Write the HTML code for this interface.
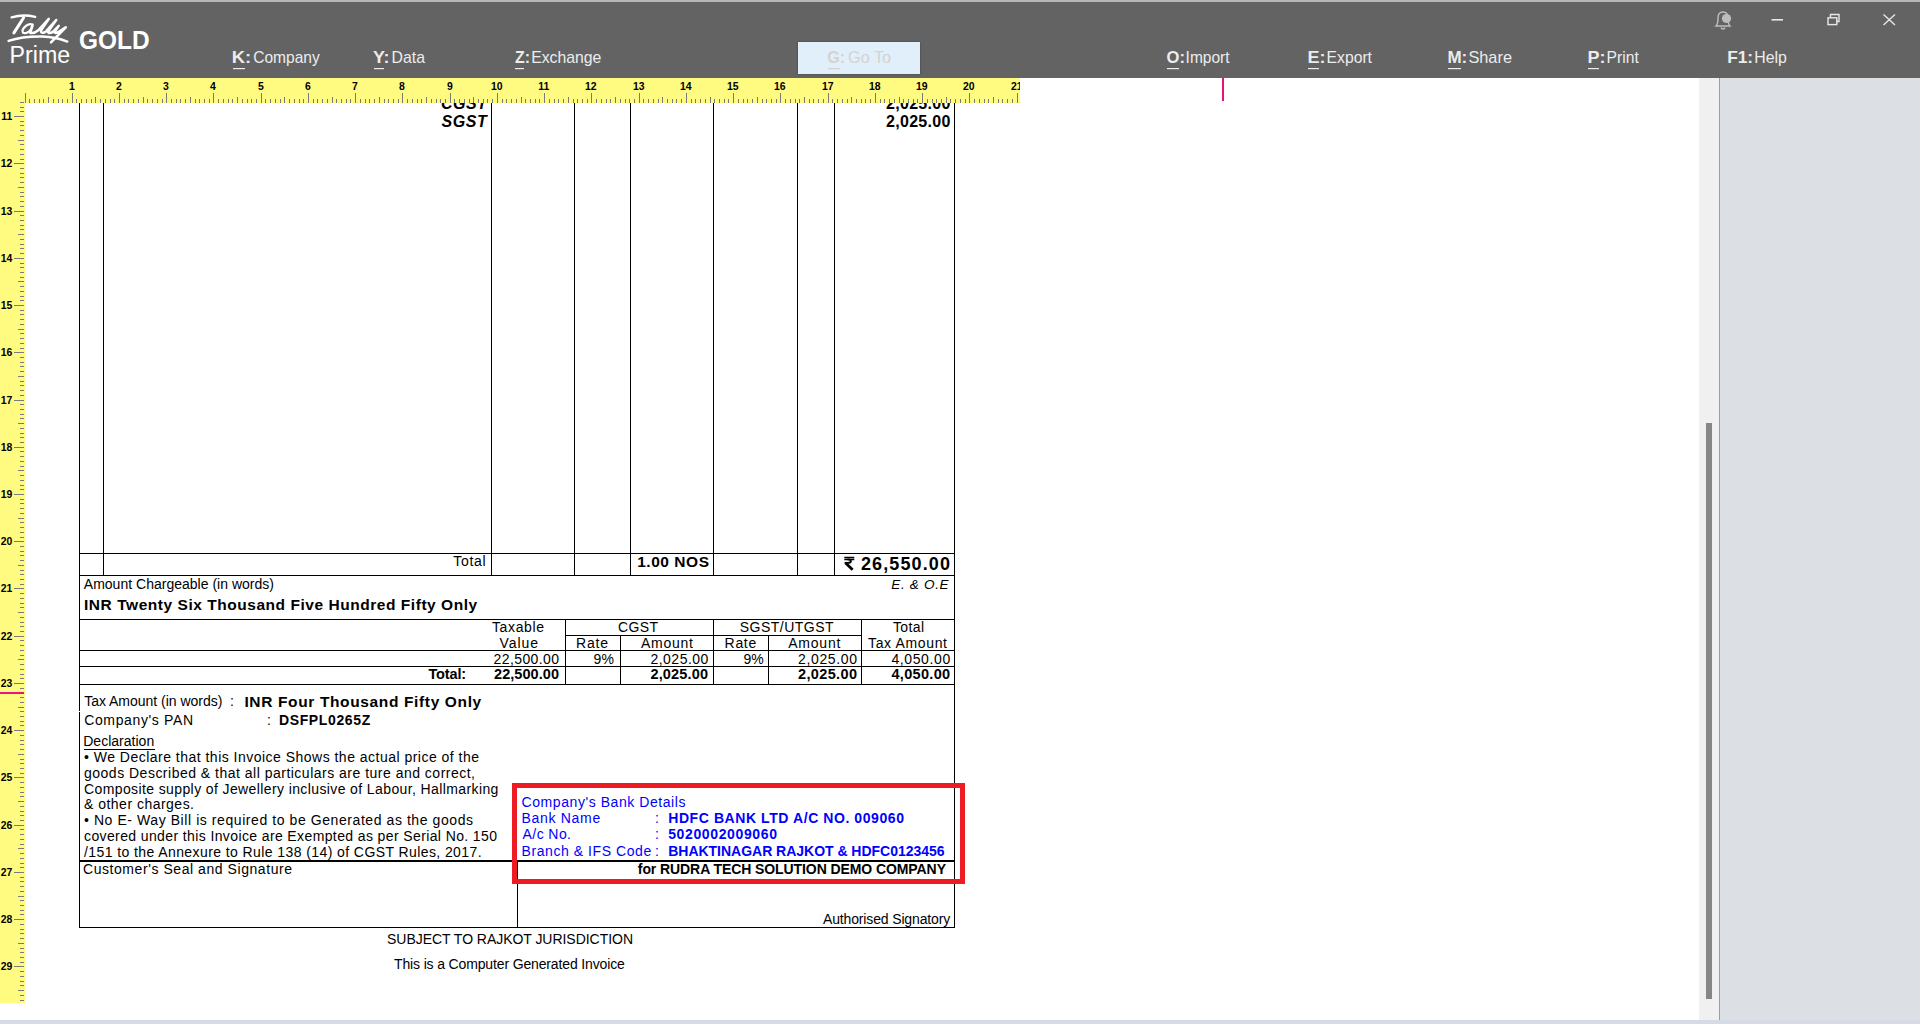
<!DOCTYPE html><html><head><meta charset="utf-8"><title>TallyPrime</title><style>
*{margin:0;padding:0;box-sizing:border-box}
html,body{width:1920px;height:1024px;overflow:hidden;background:#fff;font-family:"Liberation Sans",sans-serif}
.abs{position:absolute}
#top{left:0;top:0;width:1920px;height:2px;background:#BAB6B6}
#hdr{left:0;top:2px;width:1920px;height:76px;background:#636363}
#goto{left:798px;top:42px;width:122px;height:32px;background:#E1EFFA;box-shadow:0 0 2px rgba(0,0,0,.35)}
#rpanel{left:1719px;top:78px;width:201px;height:942px;background:#DCE0E4;border-left:1px solid #9C9C9C}
#track{left:1699px;top:78px;width:20px;height:942px;background:#F0F0F0}
#thumb{left:1706px;top:423px;width:6px;height:576px;background:#868686}
#bot{left:0;top:1020px;width:1920px;height:4px;background:#D5DAE4}

</style></head><body>
<div id="top" class="abs"></div>
<div id="hdr" class="abs"></div>
<svg class="abs" style="left:0;top:0" width="160" height="78" viewBox="0 0 160 78">
<g fill="none" stroke="#fff" stroke-linecap="round" stroke-linejoin="round">
<path d="M11.6 17.4 C18 15.4 28 15.1 35.2 16.9" stroke-width="2.3"/>
<path d="M23.6 17.7 L13.9 32.9" stroke-width="3"/>
<ellipse cx="27.4" cy="28.7" rx="5.9" ry="3.1" transform="rotate(-40 27.4 28.7)" stroke-width="2.2"/>
<path d="M32.6 24.6 L30.2 32.8 C33 33.6 35.5 32.5 38 30.5 L48.8 18.8 L41 30.6 C40.4 33.2 43.5 33.4 46 31.4 L56.2 20 L48.2 31.6 C47.8 33.8 51 33.4 53.6 31.2 L58.8 25.8 L54.6 31.8 C54.4 33.6 57 33 59.5 31.4 L65.8 27.3 L51 42.3" stroke-width="2.5"/>
<path d="M8.6 40.9 C18 37.8 30 36.3 42 36.5 C52 36.8 60 38.6 67.3 41.6" stroke-width="2.4"/>
</g>
<text x="9.6" y="63" font-family="Liberation Sans" font-size="23" fill="#fff" textLength="60.6" lengthAdjust="spacingAndGlyphs">Prime</text>
<text x="79" y="48.8" font-family="Liberation Sans" font-size="25.5" font-weight="bold" fill="#fff" textLength="70.6" lengthAdjust="spacingAndGlyphs">GOLD</text>
</svg>
<div id="goto" class="abs"></div>
<svg class="abs" style="left:0;top:0" width="1920" height="78" font-family="Liberation Sans">
<text x="231.8" y="63" font-size="17" fill="#ECECEC" font-weight="bold" textLength="19.4" lengthAdjust="spacingAndGlyphs">K:</text>
<text x="253.2" y="63" font-size="17" fill="#ECECEC" textLength="66.6" lengthAdjust="spacingAndGlyphs">Company</text>
<text x="373.0" y="63" font-size="17" fill="#ECECEC" font-weight="bold" textLength="16.6" lengthAdjust="spacingAndGlyphs">Y:</text>
<text x="391.6" y="63" font-size="17" fill="#ECECEC" textLength="33.4" lengthAdjust="spacingAndGlyphs">Data</text>
<text x="515.0" y="63" font-size="17" fill="#ECECEC" font-weight="bold" textLength="15.0" lengthAdjust="spacingAndGlyphs">Z:</text>
<text x="531.2" y="63" font-size="17" fill="#ECECEC" textLength="70.2" lengthAdjust="spacingAndGlyphs">Exchange</text>
<text x="827.2" y="63" font-size="17" fill="#D5D2CF" font-weight="bold" textLength="18.0" lengthAdjust="spacingAndGlyphs">G:</text>
<text x="848.0" y="63" font-size="17" fill="#D5D2CF" textLength="43.2" lengthAdjust="spacingAndGlyphs">Go To</text>
<text x="1166.6" y="63" font-size="17" fill="#ECECEC" font-weight="bold" textLength="18.4" lengthAdjust="spacingAndGlyphs">O:</text>
<text x="1185.6" y="63" font-size="17" fill="#ECECEC" textLength="44.0" lengthAdjust="spacingAndGlyphs">Import</text>
<text x="1307.6" y="63" font-size="17" fill="#ECECEC" font-weight="bold" textLength="18.0" lengthAdjust="spacingAndGlyphs">E:</text>
<text x="1326.6" y="63" font-size="17" fill="#ECECEC" textLength="45.4" lengthAdjust="spacingAndGlyphs">Export</text>
<text x="1447.4" y="63" font-size="17" fill="#ECECEC" font-weight="bold" textLength="19.8" lengthAdjust="spacingAndGlyphs">M:</text>
<text x="1468.4" y="63" font-size="17" fill="#ECECEC" textLength="43.6" lengthAdjust="spacingAndGlyphs">Share</text>
<text x="1587.6" y="63" font-size="17" fill="#ECECEC" font-weight="bold" textLength="18.0" lengthAdjust="spacingAndGlyphs">P:</text>
<text x="1606.6" y="63" font-size="17" fill="#ECECEC" textLength="32.2" lengthAdjust="spacingAndGlyphs">Print</text>
<text x="1727.2" y="63" font-size="17" fill="#ECECEC" font-weight="bold" textLength="25.8" lengthAdjust="spacingAndGlyphs">F1:</text>
<text x="1754.2" y="63" font-size="17" fill="#ECECEC" textLength="32.6" lengthAdjust="spacingAndGlyphs">Help</text>
<rect x="233" y="68" width="12" height="1.2" fill="#ECECEC"/>
<rect x="374" y="68" width="10" height="1.2" fill="#ECECEC"/>
<rect x="515" y="68" width="9" height="1.2" fill="#ECECEC"/>
<rect x="828" y="68" width="12" height="1.2" fill="#D5D2CF"/>
<rect x="1167" y="68" width="12" height="1.2" fill="#ECECEC"/>
<rect x="1308" y="68" width="11" height="1.2" fill="#ECECEC"/>
<rect x="1448" y="68" width="13" height="1.2" fill="#ECECEC"/>
<rect x="1588" y="68" width="11" height="1.2" fill="#ECECEC"/>
</svg>
<svg class="abs" style="left:1700px;top:0" width="220" height="40" viewBox="0 0 220 40">
<g fill="none" stroke="#BDBDBD" stroke-width="1.4">
<path d="M16 26 C18 24 18 22 18 18 C18 14 20 12 23 12 C26 12 28 14 28 18 C28 22 28 24 30 26 Z"/>
<path d="M21 27.5 C21.5 29.5 24.5 29.5 25 27.5"/>
</g>
<circle cx="26.5" cy="18.5" r="4.6" fill="#BDBDBD"/>
<rect x="71.5" y="19" width="11.5" height="1.6" fill="#E8E8E8"/>
<g fill="none" stroke="#E8E8E8" stroke-width="1.4">
<path d="M130.5 17.5 V14.5 H139 V21.5 H137"/>
<rect x="128" y="17.8" width="8.8" height="6.8"/>
<path d="M183.5 14.5 L195 25 M195 14.5 L183.5 25"/>
</g>
</svg>
<div id="track" class="abs"></div><div id="rpanel" class="abs"></div><div id="thumb" class="abs"></div><div id="bot" class="abs"></div>
<div class="abs" style="left:1222px;top:78px;width:2px;height:23px;background:#E8127C"></div>
<svg class="abs" style="left:0;top:0" width="1700" height="1020" viewBox="0 0 1700 1020" font-family="Liberation Sans">
<rect x="103" y="103" width="1" height="473" fill="#000"/>
<rect x="491" y="103" width="1" height="473" fill="#000"/>
<rect x="574" y="103" width="1" height="473" fill="#000"/>
<rect x="630" y="103" width="1" height="473" fill="#000"/>
<rect x="713" y="103" width="1" height="473" fill="#000"/>
<rect x="797" y="103" width="1" height="473" fill="#000"/>
<rect x="834" y="103" width="1" height="473" fill="#000"/>
<rect x="79" y="103" width="1" height="608" fill="#000"/>
<rect x="79" y="712" width="1" height="216" fill="#000"/>
<rect x="954" y="103" width="1" height="825" fill="#000"/>
<rect x="79" y="553" width="876" height="1" fill="#000"/>
<rect x="79" y="575" width="876" height="1" fill="#000"/>
<rect x="79" y="619" width="876" height="1" fill="#000"/>
<rect x="565" y="619" width="1" height="65" fill="#000"/>
<rect x="713" y="619" width="1" height="65" fill="#000"/>
<rect x="861" y="619" width="1" height="65" fill="#000"/>
<rect x="620" y="635" width="1" height="49" fill="#000"/>
<rect x="768" y="635" width="1" height="49" fill="#000"/>
<rect x="565" y="635" width="297" height="1" fill="#000"/>
<rect x="79" y="650" width="876" height="1" fill="#000"/>
<rect x="79" y="666" width="876" height="1" fill="#000"/>
<rect x="79" y="684" width="876" height="1" fill="#000"/>
<rect x="79" y="860" width="876" height="2" fill="#000"/>
<rect x="517" y="862" width="1" height="66" fill="#000"/>
<rect x="79" y="927" width="876" height="1" fill="#000"/>
<rect x="84" y="749" width="71" height="1" fill="#000"/>
<text x="441.0" y="109" font-size="16" font-weight="bold" font-style="italic" textLength="45.8" lengthAdjust="spacing">CGST</text>
<text x="441.6" y="127" font-size="16" font-weight="bold" font-style="italic" textLength="45.2" lengthAdjust="spacing">SGST</text>
<text x="886.0" y="109" font-size="16" font-weight="bold" textLength="64.4" lengthAdjust="spacing">2,025.00</text>
<text x="886.0" y="127" font-size="16" font-weight="bold" textLength="64.4" lengthAdjust="spacing">2,025.00</text>
<text x="453.2" y="566" font-size="14" textLength="32.4" lengthAdjust="spacing">Total</text>
<text x="637.2" y="567" font-size="15.5" font-weight="bold" textLength="71.8" lengthAdjust="spacing">1.00 NOS</text>
<text x="861.0" y="570" font-size="18" font-weight="bold" textLength="89.0" lengthAdjust="spacing">26,550.00</text>
<text x="891.2" y="589" font-size="13.5" font-style="italic" textLength="57.4" lengthAdjust="spacing">E. &amp; O.E</text>
<text x="83.8" y="589" font-size="14" textLength="190.2" lengthAdjust="spacing">Amount Chargeable (in words)</text>
<text x="84.0" y="610" font-size="15.5" font-weight="bold" textLength="393.2" lengthAdjust="spacing">INR Twenty Six Thousand Five Hundred Fifty Only</text>
<text x="492.0" y="632" font-size="14" textLength="52.0" lengthAdjust="spacing">Taxable</text>
<text x="499.6" y="648" font-size="14" textLength="38.4" lengthAdjust="spacing">Value</text>
<text x="618.0" y="632" font-size="14" textLength="40.0" lengthAdjust="spacing">CGST</text>
<text x="576.0" y="648" font-size="14" textLength="32.0" lengthAdjust="spacing">Rate</text>
<text x="641.0" y="648" font-size="14" textLength="52.0" lengthAdjust="spacing">Amount</text>
<text x="739.8" y="632" font-size="14" textLength="93.8" lengthAdjust="spacing">SGST/UTGST</text>
<text x="724.6" y="648" font-size="14" textLength="31.6" lengthAdjust="spacing">Rate</text>
<text x="788.2" y="648" font-size="14" textLength="52.2" lengthAdjust="spacing">Amount</text>
<text x="893.0" y="632" font-size="14" textLength="31.0" lengthAdjust="spacing">Total</text>
<text x="868.0" y="648" font-size="14" textLength="79.0" lengthAdjust="spacing">Tax Amount</text>
<text x="493.6" y="664" font-size="14" textLength="65.4" lengthAdjust="spacing">22,500.00</text>
<text x="593.6" y="664" font-size="14">9%</text>
<text x="650.4" y="664" font-size="14" textLength="58.0" lengthAdjust="spacing">2,025.00</text>
<text x="743.4" y="664" font-size="14">9%</text>
<text x="798.0" y="664" font-size="14" textLength="59.0" lengthAdjust="spacing">2,025.00</text>
<text x="891.4" y="664" font-size="14" textLength="58.8" lengthAdjust="spacing">4,050.00</text>
<text x="428.4" y="679" font-size="14.5" font-weight="bold" textLength="37.8" lengthAdjust="spacing">Total:</text>
<text x="494.0" y="679" font-size="14.5" font-weight="bold" textLength="65.0" lengthAdjust="spacing">22,500.00</text>
<text x="650.4" y="679" font-size="14.5" font-weight="bold" textLength="57.6" lengthAdjust="spacing">2,025.00</text>
<text x="798.0" y="679" font-size="14.5" font-weight="bold" textLength="59.0" lengthAdjust="spacing">2,025.00</text>
<text x="891.4" y="679" font-size="14.5" font-weight="bold" textLength="58.8" lengthAdjust="spacing">4,050.00</text>
<text x="84.2" y="706" font-size="14" textLength="138.2" lengthAdjust="spacing">Tax Amount (in words)</text>
<text x="230.0" y="706" font-size="14">:</text>
<text x="244.4" y="707" font-size="15.5" font-weight="bold" textLength="236.8" lengthAdjust="spacing">INR Four Thousand Fifty Only</text>
<text x="84.2" y="725" font-size="14" textLength="108.8" lengthAdjust="spacing">Company's PAN</text>
<text x="267.0" y="725" font-size="14">:</text>
<text x="279.0" y="725" font-size="14" font-weight="bold" textLength="91.2" lengthAdjust="spacing">DSFPL0265Z</text>
<text x="83.2" y="746" font-size="14" textLength="71.0" lengthAdjust="spacing">Declaration</text>
<text x="84.0" y="762" font-size="14" textLength="395.0" lengthAdjust="spacing">• We Declare that this Invoice Shows the actual price of the</text>
<text x="84.0" y="778" font-size="14" textLength="391.0" lengthAdjust="spacing">goods Described &amp; that all particulars are ture and correct,</text>
<text x="84.0" y="794" font-size="14" textLength="414.4" lengthAdjust="spacing">Composite supply of Jewellery inclusive of Labour, Hallmarking</text>
<text x="84.0" y="809" font-size="14" textLength="110.0" lengthAdjust="spacing">&amp; other charges.</text>
<text x="84.0" y="825" font-size="14" textLength="389.0" lengthAdjust="spacing">• No E- Way Bill is required to  be Generated as the goods</text>
<text x="84.0" y="841" font-size="14" textLength="413.0" lengthAdjust="spacing">covered under this Invoice are Exempted as per Serial No. 150</text>
<text x="84.0" y="857" font-size="14" textLength="397.6" lengthAdjust="spacing">/151 to the Annexure to Rule 138 (14) of CGST Rules, 2017.</text>
<text x="521.6" y="807" font-size="14" fill="#0000FF" textLength="163.8" lengthAdjust="spacing">Company's Bank Details</text>
<text x="521.6" y="823" font-size="14" fill="#0000FF" textLength="78.6" lengthAdjust="spacing">Bank Name</text>
<text x="522.6" y="839" font-size="14" fill="#0000FF" textLength="48.4" lengthAdjust="spacing">A/c No.</text>
<text x="521.6" y="856" font-size="14" fill="#0000FF" textLength="129.6" lengthAdjust="spacing">Branch &amp; IFS Code</text>
<text x="655.0" y="823" font-size="14" fill="#0000FF">:</text>
<text x="655.0" y="839" font-size="14" fill="#0000FF">:</text>
<text x="655.0" y="856" font-size="14" fill="#0000FF">:</text>
<text x="668.2" y="823" font-size="14" font-weight="bold" fill="#0000FF" textLength="235.8" lengthAdjust="spacing">HDFC BANK LTD A/C NO. 009060</text>
<text x="668.2" y="839" font-size="14" font-weight="bold" fill="#0000FF" textLength="108.8" lengthAdjust="spacing">5020002009060</text>
<text x="668.2" y="856" font-size="14" font-weight="bold" fill="#0000FF" textLength="276.4" lengthAdjust="spacing">BHAKTINAGAR RAJKOT &amp; HDFC0123456</text>
<text x="637.8" y="874" font-size="14" font-weight="bold" textLength="308.2" lengthAdjust="spacing">for RUDRA TECH SOLUTION DEMO COMPANY</text>
<text x="83.0" y="874" font-size="14" textLength="209.0" lengthAdjust="spacing">Customer's Seal and Signature</text>
<text x="823.0" y="924" font-size="14" textLength="127.2" lengthAdjust="spacing">Authorised Signatory</text>
<text x="387.0" y="944" font-size="14" textLength="246.0" lengthAdjust="spacing">SUBJECT TO RAJKOT JURISDICTION</text>
<text x="394.0" y="969" font-size="14" textLength="230.8" lengthAdjust="spacing">This is a Computer Generated Invoice</text>
<path d="M512 783 H965 V884 H512 Z M517 788 V879 H960 V788 Z" fill="#ED1C24" fill-rule="evenodd"/>
<g fill="none" stroke="#000"><path d="M844.3 557.4 H854.3 M844.3 559.6 H854.3" stroke-width="1.5"/><path d="M847.5 559.4 C852 559.4 852 562.9 847.5 562.9 H844.6" stroke-width="1.9"/><path d="M845.6 563 L852.6 569.8" stroke-width="2.8"/></g>
<rect x="0" y="78" width="1020" height="25" fill="#FFFB80"/>
<rect x="0" y="78" width="25" height="925" fill="#FFFB80"/>
<rect x="25" y="93" width="1" height="10" fill="#7A7A7A"/>
<rect x="29" y="99" width="1" height="4" fill="#7A7A7A"/>
<rect x="34" y="99" width="1" height="4" fill="#7A7A7A"/>
<rect x="39" y="99" width="1" height="4" fill="#7A7A7A"/>
<rect x="43" y="99" width="1" height="4" fill="#7A7A7A"/>
<rect x="48" y="97" width="1" height="6" fill="#7A7A7A"/>
<rect x="53" y="99" width="1" height="4" fill="#7A7A7A"/>
<rect x="58" y="99" width="1" height="4" fill="#7A7A7A"/>
<rect x="62" y="99" width="1" height="4" fill="#7A7A7A"/>
<rect x="67" y="99" width="1" height="4" fill="#7A7A7A"/>
<rect x="72" y="93" width="1" height="10" fill="#7A7A7A"/>
<rect x="76" y="99" width="1" height="4" fill="#7A7A7A"/>
<rect x="81" y="99" width="1" height="4" fill="#7A7A7A"/>
<rect x="86" y="99" width="1" height="4" fill="#7A7A7A"/>
<rect x="91" y="99" width="1" height="4" fill="#7A7A7A"/>
<rect x="95" y="97" width="1" height="6" fill="#7A7A7A"/>
<rect x="100" y="99" width="1" height="4" fill="#7A7A7A"/>
<rect x="105" y="99" width="1" height="4" fill="#7A7A7A"/>
<rect x="110" y="99" width="1" height="4" fill="#7A7A7A"/>
<rect x="114" y="99" width="1" height="4" fill="#7A7A7A"/>
<rect x="119" y="93" width="1" height="10" fill="#7A7A7A"/>
<rect x="124" y="99" width="1" height="4" fill="#7A7A7A"/>
<rect x="128" y="99" width="1" height="4" fill="#7A7A7A"/>
<rect x="133" y="99" width="1" height="4" fill="#7A7A7A"/>
<rect x="138" y="99" width="1" height="4" fill="#7A7A7A"/>
<rect x="143" y="97" width="1" height="6" fill="#7A7A7A"/>
<rect x="147" y="99" width="1" height="4" fill="#7A7A7A"/>
<rect x="152" y="99" width="1" height="4" fill="#7A7A7A"/>
<rect x="157" y="99" width="1" height="4" fill="#7A7A7A"/>
<rect x="162" y="99" width="1" height="4" fill="#7A7A7A"/>
<rect x="166" y="93" width="1" height="10" fill="#7A7A7A"/>
<rect x="171" y="99" width="1" height="4" fill="#7A7A7A"/>
<rect x="176" y="99" width="1" height="4" fill="#7A7A7A"/>
<rect x="180" y="99" width="1" height="4" fill="#7A7A7A"/>
<rect x="185" y="99" width="1" height="4" fill="#7A7A7A"/>
<rect x="190" y="97" width="1" height="6" fill="#7A7A7A"/>
<rect x="195" y="99" width="1" height="4" fill="#7A7A7A"/>
<rect x="199" y="99" width="1" height="4" fill="#7A7A7A"/>
<rect x="204" y="99" width="1" height="4" fill="#7A7A7A"/>
<rect x="209" y="99" width="1" height="4" fill="#7A7A7A"/>
<rect x="213" y="93" width="1" height="10" fill="#7A7A7A"/>
<rect x="218" y="99" width="1" height="4" fill="#7A7A7A"/>
<rect x="223" y="99" width="1" height="4" fill="#7A7A7A"/>
<rect x="228" y="99" width="1" height="4" fill="#7A7A7A"/>
<rect x="232" y="99" width="1" height="4" fill="#7A7A7A"/>
<rect x="237" y="97" width="1" height="6" fill="#7A7A7A"/>
<rect x="242" y="99" width="1" height="4" fill="#7A7A7A"/>
<rect x="247" y="99" width="1" height="4" fill="#7A7A7A"/>
<rect x="251" y="99" width="1" height="4" fill="#7A7A7A"/>
<rect x="256" y="99" width="1" height="4" fill="#7A7A7A"/>
<rect x="261" y="93" width="1" height="10" fill="#7A7A7A"/>
<rect x="265" y="99" width="1" height="4" fill="#7A7A7A"/>
<rect x="270" y="99" width="1" height="4" fill="#7A7A7A"/>
<rect x="275" y="99" width="1" height="4" fill="#7A7A7A"/>
<rect x="280" y="99" width="1" height="4" fill="#7A7A7A"/>
<rect x="284" y="97" width="1" height="6" fill="#7A7A7A"/>
<rect x="289" y="99" width="1" height="4" fill="#7A7A7A"/>
<rect x="294" y="99" width="1" height="4" fill="#7A7A7A"/>
<rect x="299" y="99" width="1" height="4" fill="#7A7A7A"/>
<rect x="303" y="99" width="1" height="4" fill="#7A7A7A"/>
<rect x="308" y="93" width="1" height="10" fill="#7A7A7A"/>
<rect x="313" y="99" width="1" height="4" fill="#7A7A7A"/>
<rect x="317" y="99" width="1" height="4" fill="#7A7A7A"/>
<rect x="322" y="99" width="1" height="4" fill="#7A7A7A"/>
<rect x="327" y="99" width="1" height="4" fill="#7A7A7A"/>
<rect x="332" y="97" width="1" height="6" fill="#7A7A7A"/>
<rect x="336" y="99" width="1" height="4" fill="#7A7A7A"/>
<rect x="341" y="99" width="1" height="4" fill="#7A7A7A"/>
<rect x="346" y="99" width="1" height="4" fill="#7A7A7A"/>
<rect x="350" y="99" width="1" height="4" fill="#7A7A7A"/>
<rect x="355" y="93" width="1" height="10" fill="#7A7A7A"/>
<rect x="360" y="99" width="1" height="4" fill="#7A7A7A"/>
<rect x="365" y="99" width="1" height="4" fill="#7A7A7A"/>
<rect x="369" y="99" width="1" height="4" fill="#7A7A7A"/>
<rect x="374" y="99" width="1" height="4" fill="#7A7A7A"/>
<rect x="379" y="97" width="1" height="6" fill="#7A7A7A"/>
<rect x="384" y="99" width="1" height="4" fill="#7A7A7A"/>
<rect x="388" y="99" width="1" height="4" fill="#7A7A7A"/>
<rect x="393" y="99" width="1" height="4" fill="#7A7A7A"/>
<rect x="398" y="99" width="1" height="4" fill="#7A7A7A"/>
<rect x="402" y="93" width="1" height="10" fill="#7A7A7A"/>
<rect x="407" y="99" width="1" height="4" fill="#7A7A7A"/>
<rect x="412" y="99" width="1" height="4" fill="#7A7A7A"/>
<rect x="417" y="99" width="1" height="4" fill="#7A7A7A"/>
<rect x="421" y="99" width="1" height="4" fill="#7A7A7A"/>
<rect x="426" y="97" width="1" height="6" fill="#7A7A7A"/>
<rect x="431" y="99" width="1" height="4" fill="#7A7A7A"/>
<rect x="436" y="99" width="1" height="4" fill="#7A7A7A"/>
<rect x="440" y="99" width="1" height="4" fill="#7A7A7A"/>
<rect x="445" y="99" width="1" height="4" fill="#7A7A7A"/>
<rect x="450" y="93" width="1" height="10" fill="#7A7A7A"/>
<rect x="454" y="99" width="1" height="4" fill="#7A7A7A"/>
<rect x="459" y="99" width="1" height="4" fill="#7A7A7A"/>
<rect x="464" y="99" width="1" height="4" fill="#7A7A7A"/>
<rect x="469" y="99" width="1" height="4" fill="#7A7A7A"/>
<rect x="473" y="97" width="1" height="6" fill="#7A7A7A"/>
<rect x="478" y="99" width="1" height="4" fill="#7A7A7A"/>
<rect x="483" y="99" width="1" height="4" fill="#7A7A7A"/>
<rect x="487" y="99" width="1" height="4" fill="#7A7A7A"/>
<rect x="492" y="99" width="1" height="4" fill="#7A7A7A"/>
<rect x="497" y="93" width="1" height="10" fill="#7A7A7A"/>
<rect x="502" y="99" width="1" height="4" fill="#7A7A7A"/>
<rect x="506" y="99" width="1" height="4" fill="#7A7A7A"/>
<rect x="511" y="99" width="1" height="4" fill="#7A7A7A"/>
<rect x="516" y="99" width="1" height="4" fill="#7A7A7A"/>
<rect x="521" y="97" width="1" height="6" fill="#7A7A7A"/>
<rect x="525" y="99" width="1" height="4" fill="#7A7A7A"/>
<rect x="530" y="99" width="1" height="4" fill="#7A7A7A"/>
<rect x="535" y="99" width="1" height="4" fill="#7A7A7A"/>
<rect x="539" y="99" width="1" height="4" fill="#7A7A7A"/>
<rect x="544" y="93" width="1" height="10" fill="#7A7A7A"/>
<rect x="549" y="99" width="1" height="4" fill="#7A7A7A"/>
<rect x="554" y="99" width="1" height="4" fill="#7A7A7A"/>
<rect x="558" y="99" width="1" height="4" fill="#7A7A7A"/>
<rect x="563" y="99" width="1" height="4" fill="#7A7A7A"/>
<rect x="568" y="97" width="1" height="6" fill="#7A7A7A"/>
<rect x="573" y="99" width="1" height="4" fill="#7A7A7A"/>
<rect x="577" y="99" width="1" height="4" fill="#7A7A7A"/>
<rect x="582" y="99" width="1" height="4" fill="#7A7A7A"/>
<rect x="587" y="99" width="1" height="4" fill="#7A7A7A"/>
<rect x="591" y="93" width="1" height="10" fill="#7A7A7A"/>
<rect x="596" y="99" width="1" height="4" fill="#7A7A7A"/>
<rect x="601" y="99" width="1" height="4" fill="#7A7A7A"/>
<rect x="606" y="99" width="1" height="4" fill="#7A7A7A"/>
<rect x="610" y="99" width="1" height="4" fill="#7A7A7A"/>
<rect x="615" y="97" width="1" height="6" fill="#7A7A7A"/>
<rect x="620" y="99" width="1" height="4" fill="#7A7A7A"/>
<rect x="625" y="99" width="1" height="4" fill="#7A7A7A"/>
<rect x="629" y="99" width="1" height="4" fill="#7A7A7A"/>
<rect x="634" y="99" width="1" height="4" fill="#7A7A7A"/>
<rect x="639" y="93" width="1" height="10" fill="#7A7A7A"/>
<rect x="643" y="99" width="1" height="4" fill="#7A7A7A"/>
<rect x="648" y="99" width="1" height="4" fill="#7A7A7A"/>
<rect x="653" y="99" width="1" height="4" fill="#7A7A7A"/>
<rect x="658" y="99" width="1" height="4" fill="#7A7A7A"/>
<rect x="662" y="97" width="1" height="6" fill="#7A7A7A"/>
<rect x="667" y="99" width="1" height="4" fill="#7A7A7A"/>
<rect x="672" y="99" width="1" height="4" fill="#7A7A7A"/>
<rect x="676" y="99" width="1" height="4" fill="#7A7A7A"/>
<rect x="681" y="99" width="1" height="4" fill="#7A7A7A"/>
<rect x="686" y="93" width="1" height="10" fill="#7A7A7A"/>
<rect x="691" y="99" width="1" height="4" fill="#7A7A7A"/>
<rect x="695" y="99" width="1" height="4" fill="#7A7A7A"/>
<rect x="700" y="99" width="1" height="4" fill="#7A7A7A"/>
<rect x="705" y="99" width="1" height="4" fill="#7A7A7A"/>
<rect x="710" y="97" width="1" height="6" fill="#7A7A7A"/>
<rect x="714" y="99" width="1" height="4" fill="#7A7A7A"/>
<rect x="719" y="99" width="1" height="4" fill="#7A7A7A"/>
<rect x="724" y="99" width="1" height="4" fill="#7A7A7A"/>
<rect x="728" y="99" width="1" height="4" fill="#7A7A7A"/>
<rect x="733" y="93" width="1" height="10" fill="#7A7A7A"/>
<rect x="738" y="99" width="1" height="4" fill="#7A7A7A"/>
<rect x="743" y="99" width="1" height="4" fill="#7A7A7A"/>
<rect x="747" y="99" width="1" height="4" fill="#7A7A7A"/>
<rect x="752" y="99" width="1" height="4" fill="#7A7A7A"/>
<rect x="757" y="97" width="1" height="6" fill="#7A7A7A"/>
<rect x="762" y="99" width="1" height="4" fill="#7A7A7A"/>
<rect x="766" y="99" width="1" height="4" fill="#7A7A7A"/>
<rect x="771" y="99" width="1" height="4" fill="#7A7A7A"/>
<rect x="776" y="99" width="1" height="4" fill="#7A7A7A"/>
<rect x="780" y="93" width="1" height="10" fill="#7A7A7A"/>
<rect x="785" y="99" width="1" height="4" fill="#7A7A7A"/>
<rect x="790" y="99" width="1" height="4" fill="#7A7A7A"/>
<rect x="795" y="99" width="1" height="4" fill="#7A7A7A"/>
<rect x="799" y="99" width="1" height="4" fill="#7A7A7A"/>
<rect x="804" y="97" width="1" height="6" fill="#7A7A7A"/>
<rect x="809" y="99" width="1" height="4" fill="#7A7A7A"/>
<rect x="813" y="99" width="1" height="4" fill="#7A7A7A"/>
<rect x="818" y="99" width="1" height="4" fill="#7A7A7A"/>
<rect x="823" y="99" width="1" height="4" fill="#7A7A7A"/>
<rect x="828" y="93" width="1" height="10" fill="#7A7A7A"/>
<rect x="832" y="99" width="1" height="4" fill="#7A7A7A"/>
<rect x="837" y="99" width="1" height="4" fill="#7A7A7A"/>
<rect x="842" y="99" width="1" height="4" fill="#7A7A7A"/>
<rect x="847" y="99" width="1" height="4" fill="#7A7A7A"/>
<rect x="851" y="97" width="1" height="6" fill="#7A7A7A"/>
<rect x="856" y="99" width="1" height="4" fill="#7A7A7A"/>
<rect x="861" y="99" width="1" height="4" fill="#7A7A7A"/>
<rect x="865" y="99" width="1" height="4" fill="#7A7A7A"/>
<rect x="870" y="99" width="1" height="4" fill="#7A7A7A"/>
<rect x="875" y="93" width="1" height="10" fill="#7A7A7A"/>
<rect x="880" y="99" width="1" height="4" fill="#7A7A7A"/>
<rect x="884" y="99" width="1" height="4" fill="#7A7A7A"/>
<rect x="889" y="99" width="1" height="4" fill="#7A7A7A"/>
<rect x="894" y="99" width="1" height="4" fill="#7A7A7A"/>
<rect x="899" y="97" width="1" height="6" fill="#7A7A7A"/>
<rect x="903" y="99" width="1" height="4" fill="#7A7A7A"/>
<rect x="908" y="99" width="1" height="4" fill="#7A7A7A"/>
<rect x="913" y="99" width="1" height="4" fill="#7A7A7A"/>
<rect x="917" y="99" width="1" height="4" fill="#7A7A7A"/>
<rect x="922" y="93" width="1" height="10" fill="#7A7A7A"/>
<rect x="927" y="99" width="1" height="4" fill="#7A7A7A"/>
<rect x="932" y="99" width="1" height="4" fill="#7A7A7A"/>
<rect x="936" y="99" width="1" height="4" fill="#7A7A7A"/>
<rect x="941" y="99" width="1" height="4" fill="#7A7A7A"/>
<rect x="946" y="97" width="1" height="6" fill="#7A7A7A"/>
<rect x="950" y="99" width="1" height="4" fill="#7A7A7A"/>
<rect x="955" y="99" width="1" height="4" fill="#7A7A7A"/>
<rect x="960" y="99" width="1" height="4" fill="#7A7A7A"/>
<rect x="965" y="99" width="1" height="4" fill="#7A7A7A"/>
<rect x="969" y="93" width="1" height="10" fill="#7A7A7A"/>
<rect x="974" y="99" width="1" height="4" fill="#7A7A7A"/>
<rect x="979" y="99" width="1" height="4" fill="#7A7A7A"/>
<rect x="984" y="99" width="1" height="4" fill="#7A7A7A"/>
<rect x="988" y="99" width="1" height="4" fill="#7A7A7A"/>
<rect x="993" y="97" width="1" height="6" fill="#7A7A7A"/>
<rect x="998" y="99" width="1" height="4" fill="#7A7A7A"/>
<rect x="1002" y="99" width="1" height="4" fill="#7A7A7A"/>
<rect x="1007" y="99" width="1" height="4" fill="#7A7A7A"/>
<rect x="1012" y="99" width="1" height="4" fill="#7A7A7A"/>
<rect x="1017" y="93" width="1" height="10" fill="#7A7A7A"/>
<rect x="20" y="102" width="4" height="1" fill="#7A7A7A"/>
<rect x="20" y="107" width="4" height="1" fill="#7A7A7A"/>
<rect x="20" y="111" width="4" height="1" fill="#7A7A7A"/>
<rect x="14" y="116" width="10" height="1" fill="#7A7A7A"/>
<rect x="20" y="121" width="4" height="1" fill="#7A7A7A"/>
<rect x="20" y="125" width="4" height="1" fill="#7A7A7A"/>
<rect x="20" y="130" width="4" height="1" fill="#7A7A7A"/>
<rect x="20" y="135" width="4" height="1" fill="#7A7A7A"/>
<rect x="18" y="140" width="6" height="1" fill="#7A7A7A"/>
<rect x="20" y="144" width="4" height="1" fill="#7A7A7A"/>
<rect x="20" y="149" width="4" height="1" fill="#7A7A7A"/>
<rect x="20" y="154" width="4" height="1" fill="#7A7A7A"/>
<rect x="20" y="159" width="4" height="1" fill="#7A7A7A"/>
<rect x="14" y="163" width="10" height="1" fill="#7A7A7A"/>
<rect x="20" y="168" width="4" height="1" fill="#7A7A7A"/>
<rect x="20" y="173" width="4" height="1" fill="#7A7A7A"/>
<rect x="20" y="177" width="4" height="1" fill="#7A7A7A"/>
<rect x="20" y="182" width="4" height="1" fill="#7A7A7A"/>
<rect x="18" y="187" width="6" height="1" fill="#7A7A7A"/>
<rect x="20" y="192" width="4" height="1" fill="#7A7A7A"/>
<rect x="20" y="196" width="4" height="1" fill="#7A7A7A"/>
<rect x="20" y="201" width="4" height="1" fill="#7A7A7A"/>
<rect x="20" y="206" width="4" height="1" fill="#7A7A7A"/>
<rect x="14" y="211" width="10" height="1" fill="#7A7A7A"/>
<rect x="20" y="215" width="4" height="1" fill="#7A7A7A"/>
<rect x="20" y="220" width="4" height="1" fill="#7A7A7A"/>
<rect x="20" y="225" width="4" height="1" fill="#7A7A7A"/>
<rect x="20" y="229" width="4" height="1" fill="#7A7A7A"/>
<rect x="18" y="234" width="6" height="1" fill="#7A7A7A"/>
<rect x="20" y="239" width="4" height="1" fill="#7A7A7A"/>
<rect x="20" y="244" width="4" height="1" fill="#7A7A7A"/>
<rect x="20" y="248" width="4" height="1" fill="#7A7A7A"/>
<rect x="20" y="253" width="4" height="1" fill="#7A7A7A"/>
<rect x="14" y="258" width="10" height="1" fill="#7A7A7A"/>
<rect x="20" y="263" width="4" height="1" fill="#7A7A7A"/>
<rect x="20" y="267" width="4" height="1" fill="#7A7A7A"/>
<rect x="20" y="272" width="4" height="1" fill="#7A7A7A"/>
<rect x="20" y="277" width="4" height="1" fill="#7A7A7A"/>
<rect x="18" y="281" width="6" height="1" fill="#7A7A7A"/>
<rect x="20" y="286" width="4" height="1" fill="#7A7A7A"/>
<rect x="20" y="291" width="4" height="1" fill="#7A7A7A"/>
<rect x="20" y="296" width="4" height="1" fill="#7A7A7A"/>
<rect x="20" y="300" width="4" height="1" fill="#7A7A7A"/>
<rect x="14" y="305" width="10" height="1" fill="#7A7A7A"/>
<rect x="20" y="310" width="4" height="1" fill="#7A7A7A"/>
<rect x="20" y="314" width="4" height="1" fill="#7A7A7A"/>
<rect x="20" y="319" width="4" height="1" fill="#7A7A7A"/>
<rect x="20" y="324" width="4" height="1" fill="#7A7A7A"/>
<rect x="18" y="329" width="6" height="1" fill="#7A7A7A"/>
<rect x="20" y="333" width="4" height="1" fill="#7A7A7A"/>
<rect x="20" y="338" width="4" height="1" fill="#7A7A7A"/>
<rect x="20" y="343" width="4" height="1" fill="#7A7A7A"/>
<rect x="20" y="348" width="4" height="1" fill="#7A7A7A"/>
<rect x="14" y="352" width="10" height="1" fill="#7A7A7A"/>
<rect x="20" y="357" width="4" height="1" fill="#7A7A7A"/>
<rect x="20" y="362" width="4" height="1" fill="#7A7A7A"/>
<rect x="20" y="366" width="4" height="1" fill="#7A7A7A"/>
<rect x="20" y="371" width="4" height="1" fill="#7A7A7A"/>
<rect x="18" y="376" width="6" height="1" fill="#7A7A7A"/>
<rect x="20" y="381" width="4" height="1" fill="#7A7A7A"/>
<rect x="20" y="385" width="4" height="1" fill="#7A7A7A"/>
<rect x="20" y="390" width="4" height="1" fill="#7A7A7A"/>
<rect x="20" y="395" width="4" height="1" fill="#7A7A7A"/>
<rect x="14" y="400" width="10" height="1" fill="#7A7A7A"/>
<rect x="20" y="404" width="4" height="1" fill="#7A7A7A"/>
<rect x="20" y="409" width="4" height="1" fill="#7A7A7A"/>
<rect x="20" y="414" width="4" height="1" fill="#7A7A7A"/>
<rect x="20" y="418" width="4" height="1" fill="#7A7A7A"/>
<rect x="18" y="423" width="6" height="1" fill="#7A7A7A"/>
<rect x="20" y="428" width="4" height="1" fill="#7A7A7A"/>
<rect x="20" y="433" width="4" height="1" fill="#7A7A7A"/>
<rect x="20" y="437" width="4" height="1" fill="#7A7A7A"/>
<rect x="20" y="442" width="4" height="1" fill="#7A7A7A"/>
<rect x="14" y="447" width="10" height="1" fill="#7A7A7A"/>
<rect x="20" y="451" width="4" height="1" fill="#7A7A7A"/>
<rect x="20" y="456" width="4" height="1" fill="#7A7A7A"/>
<rect x="20" y="461" width="4" height="1" fill="#7A7A7A"/>
<rect x="20" y="466" width="4" height="1" fill="#7A7A7A"/>
<rect x="18" y="470" width="6" height="1" fill="#7A7A7A"/>
<rect x="20" y="475" width="4" height="1" fill="#7A7A7A"/>
<rect x="20" y="480" width="4" height="1" fill="#7A7A7A"/>
<rect x="20" y="485" width="4" height="1" fill="#7A7A7A"/>
<rect x="20" y="489" width="4" height="1" fill="#7A7A7A"/>
<rect x="14" y="494" width="10" height="1" fill="#7A7A7A"/>
<rect x="20" y="499" width="4" height="1" fill="#7A7A7A"/>
<rect x="20" y="503" width="4" height="1" fill="#7A7A7A"/>
<rect x="20" y="508" width="4" height="1" fill="#7A7A7A"/>
<rect x="20" y="513" width="4" height="1" fill="#7A7A7A"/>
<rect x="18" y="518" width="6" height="1" fill="#7A7A7A"/>
<rect x="20" y="522" width="4" height="1" fill="#7A7A7A"/>
<rect x="20" y="527" width="4" height="1" fill="#7A7A7A"/>
<rect x="20" y="532" width="4" height="1" fill="#7A7A7A"/>
<rect x="20" y="537" width="4" height="1" fill="#7A7A7A"/>
<rect x="14" y="541" width="10" height="1" fill="#7A7A7A"/>
<rect x="20" y="546" width="4" height="1" fill="#7A7A7A"/>
<rect x="20" y="551" width="4" height="1" fill="#7A7A7A"/>
<rect x="20" y="555" width="4" height="1" fill="#7A7A7A"/>
<rect x="20" y="560" width="4" height="1" fill="#7A7A7A"/>
<rect x="18" y="565" width="6" height="1" fill="#7A7A7A"/>
<rect x="20" y="570" width="4" height="1" fill="#7A7A7A"/>
<rect x="20" y="574" width="4" height="1" fill="#7A7A7A"/>
<rect x="20" y="579" width="4" height="1" fill="#7A7A7A"/>
<rect x="20" y="584" width="4" height="1" fill="#7A7A7A"/>
<rect x="14" y="588" width="10" height="1" fill="#7A7A7A"/>
<rect x="20" y="593" width="4" height="1" fill="#7A7A7A"/>
<rect x="20" y="598" width="4" height="1" fill="#7A7A7A"/>
<rect x="20" y="603" width="4" height="1" fill="#7A7A7A"/>
<rect x="20" y="607" width="4" height="1" fill="#7A7A7A"/>
<rect x="18" y="612" width="6" height="1" fill="#7A7A7A"/>
<rect x="20" y="617" width="4" height="1" fill="#7A7A7A"/>
<rect x="20" y="622" width="4" height="1" fill="#7A7A7A"/>
<rect x="20" y="626" width="4" height="1" fill="#7A7A7A"/>
<rect x="20" y="631" width="4" height="1" fill="#7A7A7A"/>
<rect x="14" y="636" width="10" height="1" fill="#7A7A7A"/>
<rect x="20" y="640" width="4" height="1" fill="#7A7A7A"/>
<rect x="20" y="645" width="4" height="1" fill="#7A7A7A"/>
<rect x="20" y="650" width="4" height="1" fill="#7A7A7A"/>
<rect x="20" y="655" width="4" height="1" fill="#7A7A7A"/>
<rect x="18" y="659" width="6" height="1" fill="#7A7A7A"/>
<rect x="20" y="664" width="4" height="1" fill="#7A7A7A"/>
<rect x="20" y="669" width="4" height="1" fill="#7A7A7A"/>
<rect x="20" y="674" width="4" height="1" fill="#7A7A7A"/>
<rect x="20" y="678" width="4" height="1" fill="#7A7A7A"/>
<rect x="14" y="683" width="10" height="1" fill="#7A7A7A"/>
<rect x="20" y="688" width="4" height="1" fill="#7A7A7A"/>
<rect x="20" y="692" width="4" height="1" fill="#7A7A7A"/>
<rect x="20" y="697" width="4" height="1" fill="#7A7A7A"/>
<rect x="20" y="702" width="4" height="1" fill="#7A7A7A"/>
<rect x="18" y="707" width="6" height="1" fill="#7A7A7A"/>
<rect x="20" y="711" width="4" height="1" fill="#7A7A7A"/>
<rect x="20" y="716" width="4" height="1" fill="#7A7A7A"/>
<rect x="20" y="721" width="4" height="1" fill="#7A7A7A"/>
<rect x="20" y="725" width="4" height="1" fill="#7A7A7A"/>
<rect x="14" y="730" width="10" height="1" fill="#7A7A7A"/>
<rect x="20" y="735" width="4" height="1" fill="#7A7A7A"/>
<rect x="20" y="740" width="4" height="1" fill="#7A7A7A"/>
<rect x="20" y="744" width="4" height="1" fill="#7A7A7A"/>
<rect x="20" y="749" width="4" height="1" fill="#7A7A7A"/>
<rect x="18" y="754" width="6" height="1" fill="#7A7A7A"/>
<rect x="20" y="759" width="4" height="1" fill="#7A7A7A"/>
<rect x="20" y="763" width="4" height="1" fill="#7A7A7A"/>
<rect x="20" y="768" width="4" height="1" fill="#7A7A7A"/>
<rect x="20" y="773" width="4" height="1" fill="#7A7A7A"/>
<rect x="14" y="777" width="10" height="1" fill="#7A7A7A"/>
<rect x="20" y="782" width="4" height="1" fill="#7A7A7A"/>
<rect x="20" y="787" width="4" height="1" fill="#7A7A7A"/>
<rect x="20" y="792" width="4" height="1" fill="#7A7A7A"/>
<rect x="20" y="796" width="4" height="1" fill="#7A7A7A"/>
<rect x="18" y="801" width="6" height="1" fill="#7A7A7A"/>
<rect x="20" y="806" width="4" height="1" fill="#7A7A7A"/>
<rect x="20" y="811" width="4" height="1" fill="#7A7A7A"/>
<rect x="20" y="815" width="4" height="1" fill="#7A7A7A"/>
<rect x="20" y="820" width="4" height="1" fill="#7A7A7A"/>
<rect x="14" y="825" width="10" height="1" fill="#7A7A7A"/>
<rect x="20" y="829" width="4" height="1" fill="#7A7A7A"/>
<rect x="20" y="834" width="4" height="1" fill="#7A7A7A"/>
<rect x="20" y="839" width="4" height="1" fill="#7A7A7A"/>
<rect x="20" y="844" width="4" height="1" fill="#7A7A7A"/>
<rect x="18" y="848" width="6" height="1" fill="#7A7A7A"/>
<rect x="20" y="853" width="4" height="1" fill="#7A7A7A"/>
<rect x="20" y="858" width="4" height="1" fill="#7A7A7A"/>
<rect x="20" y="863" width="4" height="1" fill="#7A7A7A"/>
<rect x="20" y="867" width="4" height="1" fill="#7A7A7A"/>
<rect x="14" y="872" width="10" height="1" fill="#7A7A7A"/>
<rect x="20" y="877" width="4" height="1" fill="#7A7A7A"/>
<rect x="20" y="881" width="4" height="1" fill="#7A7A7A"/>
<rect x="20" y="886" width="4" height="1" fill="#7A7A7A"/>
<rect x="20" y="891" width="4" height="1" fill="#7A7A7A"/>
<rect x="18" y="896" width="6" height="1" fill="#7A7A7A"/>
<rect x="20" y="900" width="4" height="1" fill="#7A7A7A"/>
<rect x="20" y="905" width="4" height="1" fill="#7A7A7A"/>
<rect x="20" y="910" width="4" height="1" fill="#7A7A7A"/>
<rect x="20" y="914" width="4" height="1" fill="#7A7A7A"/>
<rect x="14" y="919" width="10" height="1" fill="#7A7A7A"/>
<rect x="20" y="924" width="4" height="1" fill="#7A7A7A"/>
<rect x="20" y="929" width="4" height="1" fill="#7A7A7A"/>
<rect x="20" y="933" width="4" height="1" fill="#7A7A7A"/>
<rect x="20" y="938" width="4" height="1" fill="#7A7A7A"/>
<rect x="18" y="943" width="6" height="1" fill="#7A7A7A"/>
<rect x="20" y="948" width="4" height="1" fill="#7A7A7A"/>
<rect x="20" y="952" width="4" height="1" fill="#7A7A7A"/>
<rect x="20" y="957" width="4" height="1" fill="#7A7A7A"/>
<rect x="20" y="962" width="4" height="1" fill="#7A7A7A"/>
<rect x="14" y="966" width="10" height="1" fill="#7A7A7A"/>
<rect x="20" y="971" width="4" height="1" fill="#7A7A7A"/>
<rect x="20" y="976" width="4" height="1" fill="#7A7A7A"/>
<rect x="20" y="981" width="4" height="1" fill="#7A7A7A"/>
<rect x="20" y="985" width="4" height="1" fill="#7A7A7A"/>
<rect x="18" y="990" width="6" height="1" fill="#7A7A7A"/>
<rect x="20" y="995" width="4" height="1" fill="#7A7A7A"/>
<rect x="20" y="1000" width="4" height="1" fill="#7A7A7A"/>
<clipPath id="rc"><rect x="0" y="78" width="1020" height="25"/></clipPath><g font-size="11" font-weight="bold" clip-path="url(#rc)">
<text transform="translate(71.8,90) scale(0.95,1)" text-anchor="middle">1</text>
<text transform="translate(118.8,90) scale(0.95,1)" text-anchor="middle">2</text>
<text transform="translate(165.8,90) scale(0.95,1)" text-anchor="middle">3</text>
<text transform="translate(212.8,90) scale(0.95,1)" text-anchor="middle">4</text>
<text transform="translate(260.8,90) scale(0.95,1)" text-anchor="middle">5</text>
<text transform="translate(307.8,90) scale(0.95,1)" text-anchor="middle">6</text>
<text transform="translate(354.8,90) scale(0.95,1)" text-anchor="middle">7</text>
<text transform="translate(401.8,90) scale(0.95,1)" text-anchor="middle">8</text>
<text transform="translate(449.8,90) scale(0.95,1)" text-anchor="middle">9</text>
<text transform="translate(496.8,90) scale(0.95,1)" text-anchor="middle">10</text>
<text transform="translate(543.8,90) scale(0.95,1)" text-anchor="middle">11</text>
<text transform="translate(590.8,90) scale(0.95,1)" text-anchor="middle">12</text>
<text transform="translate(638.8,90) scale(0.95,1)" text-anchor="middle">13</text>
<text transform="translate(685.8,90) scale(0.95,1)" text-anchor="middle">14</text>
<text transform="translate(732.8,90) scale(0.95,1)" text-anchor="middle">15</text>
<text transform="translate(779.8,90) scale(0.95,1)" text-anchor="middle">16</text>
<text transform="translate(827.8,90) scale(0.95,1)" text-anchor="middle">17</text>
<text transform="translate(874.8,90) scale(0.95,1)" text-anchor="middle">18</text>
<text transform="translate(921.8,90) scale(0.95,1)" text-anchor="middle">19</text>
<text transform="translate(968.8,90) scale(0.95,1)" text-anchor="middle">20</text>
<text transform="translate(1016.8,90) scale(0.95,1)" text-anchor="middle">21</text>
</g><g font-size="11" font-weight="bold">
<text transform="translate(12.4,120) scale(0.95,1)" text-anchor="end">11</text>
<text transform="translate(12.4,167) scale(0.95,1)" text-anchor="end">12</text>
<text transform="translate(12.4,215) scale(0.95,1)" text-anchor="end">13</text>
<text transform="translate(12.4,262) scale(0.95,1)" text-anchor="end">14</text>
<text transform="translate(12.4,309) scale(0.95,1)" text-anchor="end">15</text>
<text transform="translate(12.4,356) scale(0.95,1)" text-anchor="end">16</text>
<text transform="translate(12.4,404) scale(0.95,1)" text-anchor="end">17</text>
<text transform="translate(12.4,451) scale(0.95,1)" text-anchor="end">18</text>
<text transform="translate(12.4,498) scale(0.95,1)" text-anchor="end">19</text>
<text transform="translate(12.4,545) scale(0.95,1)" text-anchor="end">20</text>
<text transform="translate(12.4,592) scale(0.95,1)" text-anchor="end">21</text>
<text transform="translate(12.4,640) scale(0.95,1)" text-anchor="end">22</text>
<text transform="translate(12.4,687) scale(0.95,1)" text-anchor="end">23</text>
<text transform="translate(12.4,734) scale(0.95,1)" text-anchor="end">24</text>
<text transform="translate(12.4,781) scale(0.95,1)" text-anchor="end">25</text>
<text transform="translate(12.4,829) scale(0.95,1)" text-anchor="end">26</text>
<text transform="translate(12.4,876) scale(0.95,1)" text-anchor="end">27</text>
<text transform="translate(12.4,923) scale(0.95,1)" text-anchor="end">28</text>
<text transform="translate(12.4,970) scale(0.95,1)" text-anchor="end">29</text>
</g>
<rect x="0" y="692" width="24" height="2" fill="#F0127C"/>
</svg>
</body></html>
